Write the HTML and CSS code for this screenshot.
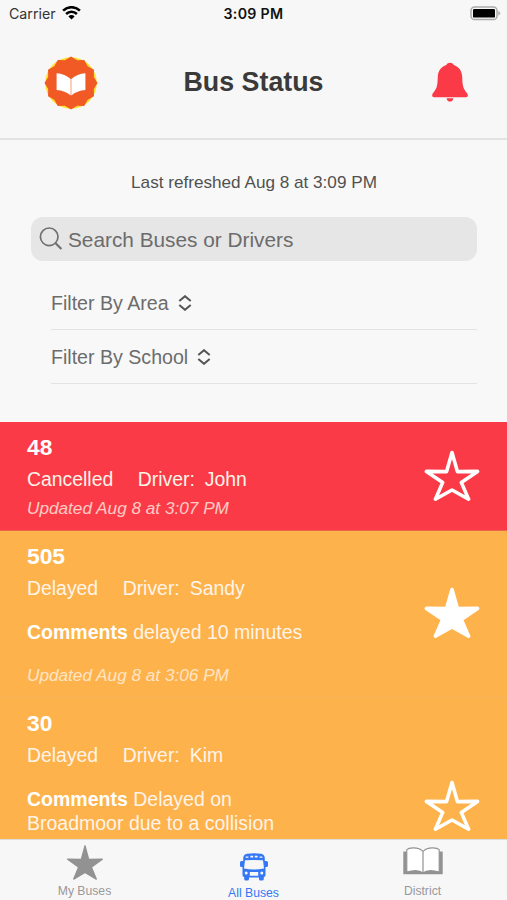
FILE: index.html
```html
<!DOCTYPE html>
<html lang="en">
<head>
<meta charset="utf-8">
<title>Bus Status</title>
<link rel="stylesheet" href="styles.css">
</head>
<body>
<svg width="0" height="0" class="defs" aria-hidden="true">
  <symbol id="star" viewBox="0 0 56 52" preserveAspectRatio="none">
    <path d="M28 2.6 L33.4 21.6 L53.6 21.4 L37.3 32.4 L44.6 49.2 L28 40 L11.4 49.2 L18.7 32.4 L2.4 21.4 L22.6 21.6 Z" stroke-linejoin="round"/>
  </symbol>
  <symbol id="sort" viewBox="0 0 14 16">
    <path d="M1.3 6 L7 1.2 L12.7 6 M1.3 10 L7 14.8 L12.7 10" fill="none" stroke="#555" stroke-width="2"/>
  </symbol>
</svg>
<div class="app">
  <div class="status-bar">
    <div class="carrier">
      <span>Carrier</span>
      <svg width="19" height="14" viewBox="0 0 19 14">
        <g fill="none" stroke="#000" stroke-width="2.5">
          <path d="M1.1 4.6 A12 12 0 0 1 17.9 4.6"/>
          <path d="M4.1 8 A7.7 7.7 0 0 1 14.9 8"/>
        </g>
        <path d="M6.4 10.4 A4.3 4.3 0 0 1 12.6 10.4 L9.5 13.6 Z"/>
      </svg>
    </div>
    <div class="clock">3:09 PM</div>
    <svg class="battery" width="31" height="15" viewBox="0 0 31 15">
      <rect x="1" y="1" width="26" height="12.6" rx="3.6" fill="#f7f7f7" stroke="#aaa" stroke-width="1.5"/>
      <rect x="3" y="3" width="22" height="8.6" rx="1.2"/>
      <path d="M28.3 4.8 Q32 7.3 28.3 9.8 Z" fill="#aaa"/>
    </svg>
  </div>

  <header class="header">
    <svg class="logo" width="54" height="54" viewBox="0 0 54 54">
      <circle cx="27" cy="27" r="25.8" fill="#ffe02a"/>
      <path fill="#f15a24" d="M27 .5 L33.1 4.2 L40.25 4.05 L43.7 10.3 L49.95 13.75 L49.8 20.9 L53.5 27 L49.8 33.1 L49.95 40.25 L43.7 43.7 L40.25 49.95 L33.1 49.8 L27 53.5 L20.9 49.8 L13.75 49.95 L10.3 43.7 L4.05 40.25 L4.2 33.1 L.5 27 L4.2 20.9 L4.05 13.75 L10.3 10.3 L13.75 4.05 L20.9 4.2 Z"/>
      <path fill="#fff" d="M12.6 17.3 Q21 17.8 26.7 23 V39.5 Q21 34.6 12.6 34 Z M41.4 17.3 Q33 17.8 27.3 23 V39.5 Q33 34.6 41.4 34 Z"/>
    </svg>
    <h1>Bus Status</h1>
    <svg class="bell" width="38" height="40" viewBox="0 0 38 40">
      <path fill="#fa3a47" d="M19 .8 C21 .8 22.2 1.8 22.6 3 C28 4.6 31 9 31.2 15 C31.5 24 32 26.5 36.3 31.6 Q38 35.2 34.6 35.3 H3.4 Q0 35.2 1.7 31.6 C6 26.5 6.5 24 6.8 15 C7 9 10 4.6 15.4 3 C15.8 1.8 17 .8 19 .8 Z M15.6 36.2 H22.4 Q21.8 39.6 19 39.6 Q16.2 39.6 15.6 36.2 Z"/>
    </svg>
  </header>

  <section class="controls">
    <p class="refreshed">Last refreshed Aug 8 at 3:09 PM</p>
    <div class="search">
      <svg width="24" height="24" viewBox="0 0 24 24"><g fill="none" stroke="#707070" stroke-width="1.7"><circle cx="10.2" cy="9.8" r="8.8"/><path d="M16.4 16 L22.4 22" stroke-width="2.1"/></g></svg>
      <span>Search Buses or Drivers</span>
    </div>
    <div class="filter"><span>Filter By Area</span><svg width="14" height="16"><use href="#sort"/></svg></div>
    <div class="filter"><span>Filter By School</span><svg width="14" height="16"><use href="#sort"/></svg></div>
  </section>

  <main class="list">
    <article class="bus cancelled">
      <div class="info">
        <h2>48</h2>
        <div class="status"><span>Cancelled</span><span>Driver:</span><span class="name">John</span></div>
        <p class="updated">Updated Aug 8 at 3:07 PM</p>
      </div>
      <svg class="star" width="56" height="52"><use href="#star"/></svg>
    </article>
    <article class="bus delayed">
      <div class="info">
        <h2>505</h2>
        <div class="status"><span>Delayed</span><span>Driver:</span><span class="name">Sandy</span></div>
        <p class="comments"><b>Comments</b> delayed 10 minutes</p>
        <p class="updated">Updated Aug 8 at 3:06 PM</p>
      </div>
      <svg class="star favorite" width="56" height="52"><use href="#star"/></svg>
    </article>
    <article class="bus delayed tall">
      <div class="info">
        <h2>30</h2>
        <div class="status"><span>Delayed</span><span>Driver:</span><span class="name">Kim</span></div>
        <p class="comments"><b>Comments</b> Delayed on Broadmoor due to a collision</p>
      </div>
      <svg class="star" width="56" height="52"><use href="#star"/></svg>
    </article>
  </main>

  <nav class="tabs">
    <div class="tab">
      <svg width="38" height="37" class="tab-star"><use href="#star"/></svg>
      <span>My Buses</span>
    </div>
    <div class="tab active">
      <svg width="30" height="28" viewBox="0 0 30 28">
        <path fill="#3478f6" fill-rule="evenodd" d="M8 .8 Q15 -.4 22 .8 Q25.6 1.6 25.8 5 V8 H27.6 Q29 8 29 9.5 V12.5 Q29 14 27.6 14 H26.5 V22 Q26.5 24 24.8 24 V26 Q24.8 27.6 23 27.6 H21.5 Q20 27.6 20 26 V24.6 H10 V26 Q10 27.6 8.5 27.6 H7 Q5.2 27.6 5.2 26 V24 Q3.5 24 3.5 22 V14 H2.4 Q1 14 1 12.5 V9.5 Q1 8 2.4 8 H4.2 V5 Q4.4 1.6 8 .8 Z M6 7.3 L5 15.5 Q15 17.4 25 15.5 L24 7.3 Q15 6.6 6 7.3 Z M10.8 19 H19.2 V22.8 H10.8 Z"/>
        <g fill="#f7f7f7"><path d="M6.8 3.4 H9.4 V4.8 H6.5 Z M11.4 2.8 H14.2 V4.6 H11.4 Z M15.8 2.8 H18.6 V4.6 H15.8 Z M20.6 3.4 H23.2 L23.5 4.8 H20.6 Z"/><circle cx="7.2" cy="20" r="1.5"/><circle cx="22.8" cy="20" r="1.5"/></g>
      </svg>
      <span>All Buses</span>
    </div>
    <div class="tab">
      <svg width="40" height="28" viewBox="0 0 40 28">
        <path fill="#929292" d="M.3 4.5 H4 V24 H36 V4.5 H39.7 V27.3 H.3 Z"/>
        <path fill="#fff" stroke="#929292" stroke-width="1.1" d="M20 4.5 Q17 .8 10 .9 Q5.5 1 3.8 2.6 V25 Q15 21.6 20 26 Q25 21.6 36.2 25 V2.6 Q34.5 1 30 .9 Q23 .8 20 4.5 Z"/>
        <path stroke="#929292" stroke-width="1.2" d="M20 4.5 V26"/>
      </svg>
      <span>District</span>
    </div>
  </nav>
</div>
</body>
</html>
```

FILE: styles.css
```css
* { box-sizing: border-box; }

body {
  margin: 0;
  background: #f8f8f8;
  font-family: "Liberation Sans", Arial, sans-serif;
}

h1, h2, p { margin: 0; }

.defs { position: absolute; }

svg { display: block; flex: none; }

.app {
  display: flex;
  flex-direction: column;
  width: 507px;
  height: 900px;
  overflow: hidden;
}

.status-bar {
  display: grid;
  grid-template-columns: 1fr auto 1fr;
  align-items: center;
  height: 28px;
  padding: 0 6px 1px 9px;
  background: #f7f7f7;
  font-family: Inter, sans-serif;
  font-size: 14.2px;
  color: #111;
}

.carrier {
  display: flex;
  gap: 6px;
  align-items: center;
}

.carrier span { color: #333; }

.carrier svg { margin-top: -1px; }

.clock {
  margin-right: 3px;
  font-weight: 600;
  letter-spacing: .3px;
}

.battery { justify-self: end; }

.header {
  display: grid;
  grid-template-columns: 1fr auto 1fr;
  align-items: center;
  height: 112px;
  padding: 0 38px 0 44px;
  border-bottom: 2px solid #e2e2e2;
  background: #f7f7f7;
}

.header h1 {
  margin: 0 6px 2px 0;
  font-size: 26.8px;
  line-height: 32px;
  color: #3a3a3a;
}

.bell {
  justify-self: end;
  margin-bottom: 3px;
}

.controls {
  height: 282px;
  padding: 30px 30px 0 31px;
}

.refreshed {
  font-size: 17.15px;
  line-height: 24px;
  text-align: center;
  color: #505050;
}

.search {
  display: flex;
  align-items: center;
  gap: 5px;
  height: 44px;
  margin: 23px 0 14px;
  padding: 0 8px;
  border-radius: 12px;
  background: #e6e6e6;
  color: #6c6c6c;
  font-size: 20.8px;
  line-height: 26px;
}

.search span { margin-top: 2px; }

.filter {
  display: flex;
  gap: 9px;
  height: 54px;
  margin-left: 20px;
  padding-top: 16px;
  color: #6c6c6c;
  font-size: 19.6px;
  line-height: 24px;
  box-shadow: 0 1px 0 #e3e3e3;
}

.filter svg { margin-top: 4px; }

.list {
  height: 417px;
  overflow: hidden;
}

.bus {
  display: flex;
  align-items: center;
  justify-content: space-between;
  padding: 12px 27px 10px;
  border-bottom: 1px solid #f2b35c;
  color: #fff4e8;
}

.cancelled { background: #fa3a47; border-bottom-color: #e8664d; }

.delayed { background: #feb24b; }

.tall { height: 218px; align-items: flex-start; }

.info { width: 290px; }

.bus h2 {
  font-size: 22.8px;
  line-height: 26px;
  color: #fff;
}

.status {
  display: flex;
  margin-top: 7px;
  font-size: 19.4px;
  line-height: 24px;
}

.status span + span { margin-left: 24.5px; }

.status .name { margin-left: 10px !important; }

.comments {
  margin: 20px 0 18px;
  font-size: 19.5px;
  line-height: 24.5px;
}

.comments b { color: #fff; }

.updated {
  margin-top: 5px;
  font-size: 17.2px;
  line-height: 24px;
  font-style: italic;
  opacity: .78;
}

.star {
  margin-bottom: 3px;
  fill: none;
  stroke: #fff;
  stroke-width: 3.6px;
}

.tall .star { margin-top: 70px; }

.favorite { fill: #fff; }

.tabs {
  display: flex;
  flex: 1;
  background: #f7f7f7;
  border-top: 1px solid #ddd;
  color: #999;
  font-size: 12.2px;
  line-height: 14px;
}

.tab {
  display: flex;
  flex: 1;
  flex-direction: column;
  align-items: center;
  justify-content: space-between;
  padding: 4px 0 2px;
}

.tab:last-child { padding-top: 7px; }

.tab-star { fill: #929292; stroke: #929292; stroke-width: 2px; }

.active { padding: 13px 0 0; color: #3478f6; }
```
